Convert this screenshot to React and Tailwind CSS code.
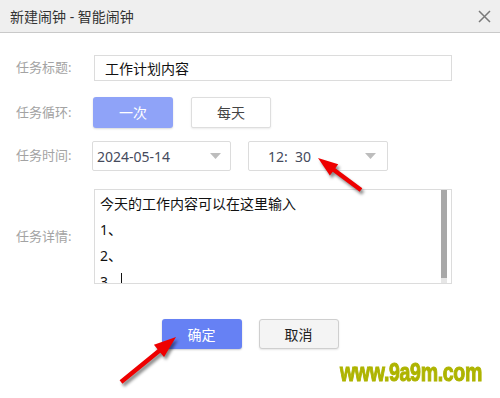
import React from "react";

const font = { fontFamily: '"Noto Sans", "Noto Sans CJK SC", sans-serif' };

// arrow polygon from tail to tip
function arrowPoints(tail, tip, head = 20, half = 7, shaft = 2.2) {
  const dx = tip[0] - tail[0];
  const dy = tip[1] - tail[1];
  const len = Math.hypot(dx, dy);
  const ux = dx / len, uy = dy / len;
  const nx = -uy, ny = ux;
  const bx = tip[0] - ux * head, by = tip[1] - uy * head;
  const p = [
    [tail[0] + nx * shaft, tail[1] + ny * shaft],
    [bx + nx * shaft, by + ny * shaft],
    [bx + nx * half, by + ny * half],
    tip,
    [bx - nx * half, by - ny * half],
    [bx - nx * shaft, by - ny * shaft],
    [tail[0] - nx * shaft, tail[1] - ny * shaft],
  ];
  return p.map((q) => q.join(",")).join(" ");
}

function Arrows() {
  const a1 = arrowPoints([361, 190], [318, 158]);
  const a2 = arrowPoints([121, 382], [176, 337], 22, 8);
  return (
    <svg className="absolute left-0 top-0 pointer-events-none" width="500" height="398">
      <defs>
        <filter id="sh" x="-20%" y="-20%" width="140%" height="140%">
          <feGaussianBlur stdDeviation="1.5" />
        </filter>
      </defs>
      <g transform="translate(2,3)" fill="rgba(0,0,0,0.45)" filter="url(#sh)">
        <polygon points={a1} />
        <polygon points={a2} />
      </g>
      <g fill="#ee0000">
        <polygon points={a1} />
        <polygon points={a2} />
      </g>
    </svg>
  );
}

function Caret() {
  return (
    <svg width="11" height="6" viewBox="0 0 11 6">
      <path d="M0 0 L11 0 L5.5 6 Z" fill="#bdbdbd" />
    </svg>
  );
}

function Label({ children }) {
  return <div className="w-[78px] shrink-0 text-[13px] text-[#a3a3a3]">{children}</div>;
}

export default function App() {
  return (
    <div className="relative w-[500px] h-[398px] bg-white overflow-hidden" style={font}>
      <div className="h-[33px] bg-[#efefef] border-b border-[#c9c9c9] flex items-center justify-between pl-[10px] pr-[9px]">
        <span className="text-[14px] text-[#333]">新建闹钟 - 智能闹钟</span>
        <svg width="13" height="13" viewBox="0 0 13 13">
          <path d="M1 1 L12 12 M12 1 L1 12" stroke="#7a7a7a" strokeWidth="1.5" />
        </svg>
      </div>

      <div className="pl-[16px]">
        <div className="mt-[22px] flex items-center">
          <Label>任务标题:</Label>
          <div className="w-[358px] h-[26px] border border-[#dcdcdc] flex items-center pl-[10px] text-[14px] text-[#111]">
            工作计划内容
          </div>
        </div>

        <div className="mt-[16px] flex items-center">
          <Label>任务循环:</Label>
          <div className="flex ml-[-1px]">
            <div className="w-[80px] h-[31px] rounded-[3px] bg-[#8fa3f8] shadow-[0_1px_2px_rgba(0,0,0,0.15)] flex items-center justify-center text-[14px] text-white">
              一次
            </div>
            <div className="ml-[18px] w-[80px] h-[31px] rounded-[2px] bg-white border border-[#dedede] shadow-[0_1px_2px_rgba(0,0,0,0.08)] flex items-center justify-center text-[14px] text-[#444]">
              每天
            </div>
          </div>
        </div>

        <div className="mt-[13px] flex items-center">
          <Label>任务时间:</Label>
          <div className="flex ml-[-2px]">
            <div className="w-[139px] h-[30px] border border-[#dcdcdc] rounded-[2px] flex items-center justify-between pl-[4px] pr-[9px] text-[14px] text-[#454a5c]">
              <span>2024-05-14</span>
              <Caret />
            </div>
            <div className="ml-[17px] w-[140px] h-[30px] border border-[#dcdcdc] rounded-[2px] flex items-center justify-between pl-[19px] pr-[11px] text-[14px] text-[#454a5c]">
              <span>12:&nbsp;&nbsp;30</span>
              <Caret />
            </div>
          </div>
        </div>

        <div className="mt-[18px] flex items-center">
          <Label>任务详情:</Label>
          <div className="w-[358px] h-[95px] border border-[#dcdcdc] flex overflow-hidden">
            <div className="flex-1 pl-[5px] pt-[1px] text-[14px] leading-[26px] text-[#111]">
              <div>今天的工作内容可以在这里输入</div>
              <div>1、</div>
              <div>2、</div>
              <div className="flex items-center">
                <span>3</span>
                <span className="ml-[13px] w-px h-[18px] bg-[#111]" />
              </div>
            </div>
            <div className="w-[6px] mr-[4px] flex flex-col">
              <div className="h-[88px] bg-[#a8a8a8]" />
              <div className="flex-1 bg-[#e6e6e6]" />
            </div>
          </div>
        </div>
      </div>

      <div className="mt-[35px] flex justify-center gap-[17px]">
        <div className="w-[80px] h-[30px] rounded-[3px] bg-[#6681f4] shadow-[0_1px_2px_rgba(0,0,0,0.2)] flex items-center justify-center text-[14px] text-white">
          确定
        </div>
        <div className="w-[80px] h-[30px] rounded-[3px] bg-[#f4f4f4] border border-[#cfcfcf] shadow-[0_1px_2px_rgba(0,0,0,0.1)] flex items-center justify-center text-[14px] text-[#222]">
          取消
        </div>
      </div>

      <div
        className="absolute left-[340px] top-[353px] text-[19.5px] font-bold text-[#aeb400] tracking-[-0.3px] scale-y-[1.35] origin-top [-webkit-text-stroke:0.8px_#aeb400]"
        style={{ fontFamily: '"Liberation Sans", Arial, sans-serif' }}
      >
        www.9a9m.com
      </div>

      <Arrows />
    </div>
  );
}
